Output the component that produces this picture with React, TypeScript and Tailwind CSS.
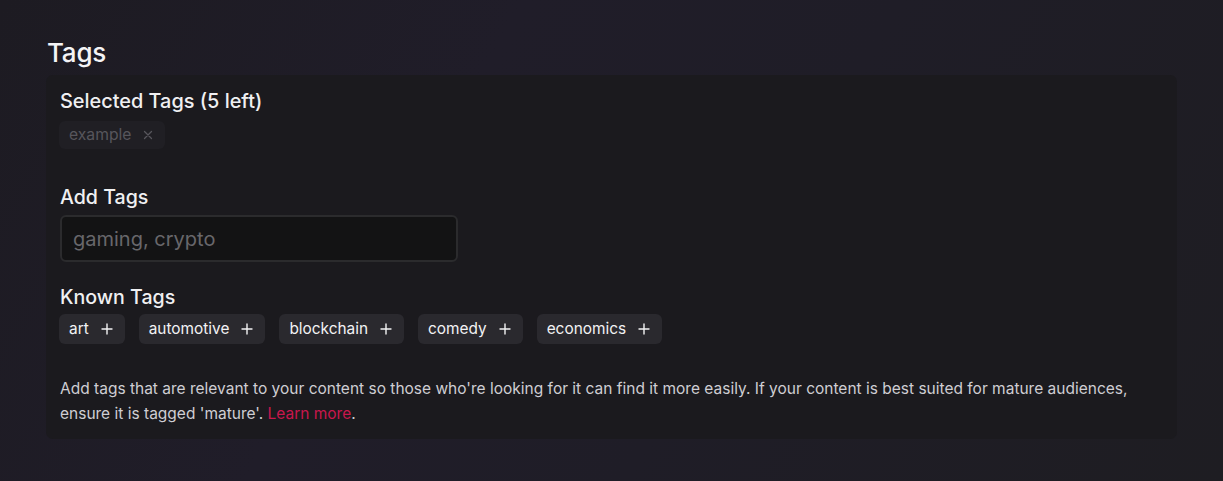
import React from "react";

const known = ["art", "automotive", "blockchain", "comedy", "economics"];

function Plus() {
  return (
    <svg width="12" height="12" viewBox="0 0 12 12" className="ml-[12px]" fill="none" stroke="currentColor" strokeWidth="1.4" strokeLinecap="round">
      <path d="M6 1v10M1 6h10" />
    </svg>
  );
}

function Cross() {
  return (
    <svg width="10" height="10" viewBox="0 0 10 10" className="ml-[12px]" fill="none" stroke="currentColor" strokeWidth="1.3" strokeLinecap="round">
      <path d="M1.5 1.5l7 7M8.5 1.5l-7 7" />
    </svg>
  );
}

export default function App() {
  return (
    <div
      className="min-h-[481px] w-full pl-[46px] pr-[46px] pt-[37px] text-white"
      style={{ fontFamily: "Inter, 'Noto Sans', sans-serif", background: "linear-gradient(120deg, #1d1b22 0%, #201d29 35%, #1f1d27 60%, #1e1d22 100%)" }}
    >
      <h2 className="text-[26px] leading-[32px] font-medium tracking-[-0.2px] text-[#f4f4f6] pl-[1px]">Tags</h2>
      <div className="mt-[6px] rounded-[7px] bg-[#1b1a1e] pl-[13px] pr-[14px] pt-[14px] pb-[13px]">
        <div className="pl-[1px] text-[19.9px] leading-[24px] font-medium text-[#f0f0f2]">Selected Tags (5 left)</div>
        <div className="mt-[8px] flex">
          <span className="flex h-[28px] items-center rounded-[6px] bg-[#201f24] pl-[10px] pr-[12px] text-[15.7px] text-[#57565c]">
            example
            <Cross />
          </span>
        </div>
        <div className="mt-[36px] pl-[1px] text-[19.6px] leading-[24px] font-medium text-[#f0f0f2]">Add Tags</div>
        <div className="ml-[1px] mt-[6px] flex h-[47px] w-[398px] items-center rounded-[6px] border-2 border-[#2b2b2d] bg-[#131314] pl-[11px] text-[20px] text-[#68676b]">
          gaming, crypto
        </div>
        <div className="mt-[23px] pl-[1px] text-[19.6px] leading-[24px] font-medium text-[#f0f0f2]">Known Tags</div>
        <div className="mt-[5px] flex gap-[14px]">
          {known.map((t) => (
            <span key={t} className="flex h-[30px] items-center rounded-[6px] bg-[#2a292e] pl-[10px] pr-[12px] text-[15.4px] text-[#f2f2f4]">
              {t}
              <Plus />
            </span>
          ))}
        </div>
        <p className="mt-[32px] pl-[1px] text-[15.5px] leading-[25px] text-[#cfced3]">
          Add tags that are relevant to your content so those who're looking for it can find it more easily. If your content is best suited for mature audiences, ensure it is tagged 'mature'. <span className="text-[#c9174d]">Learn more</span>.
        </p>
      </div>
    </div>
  );
}
